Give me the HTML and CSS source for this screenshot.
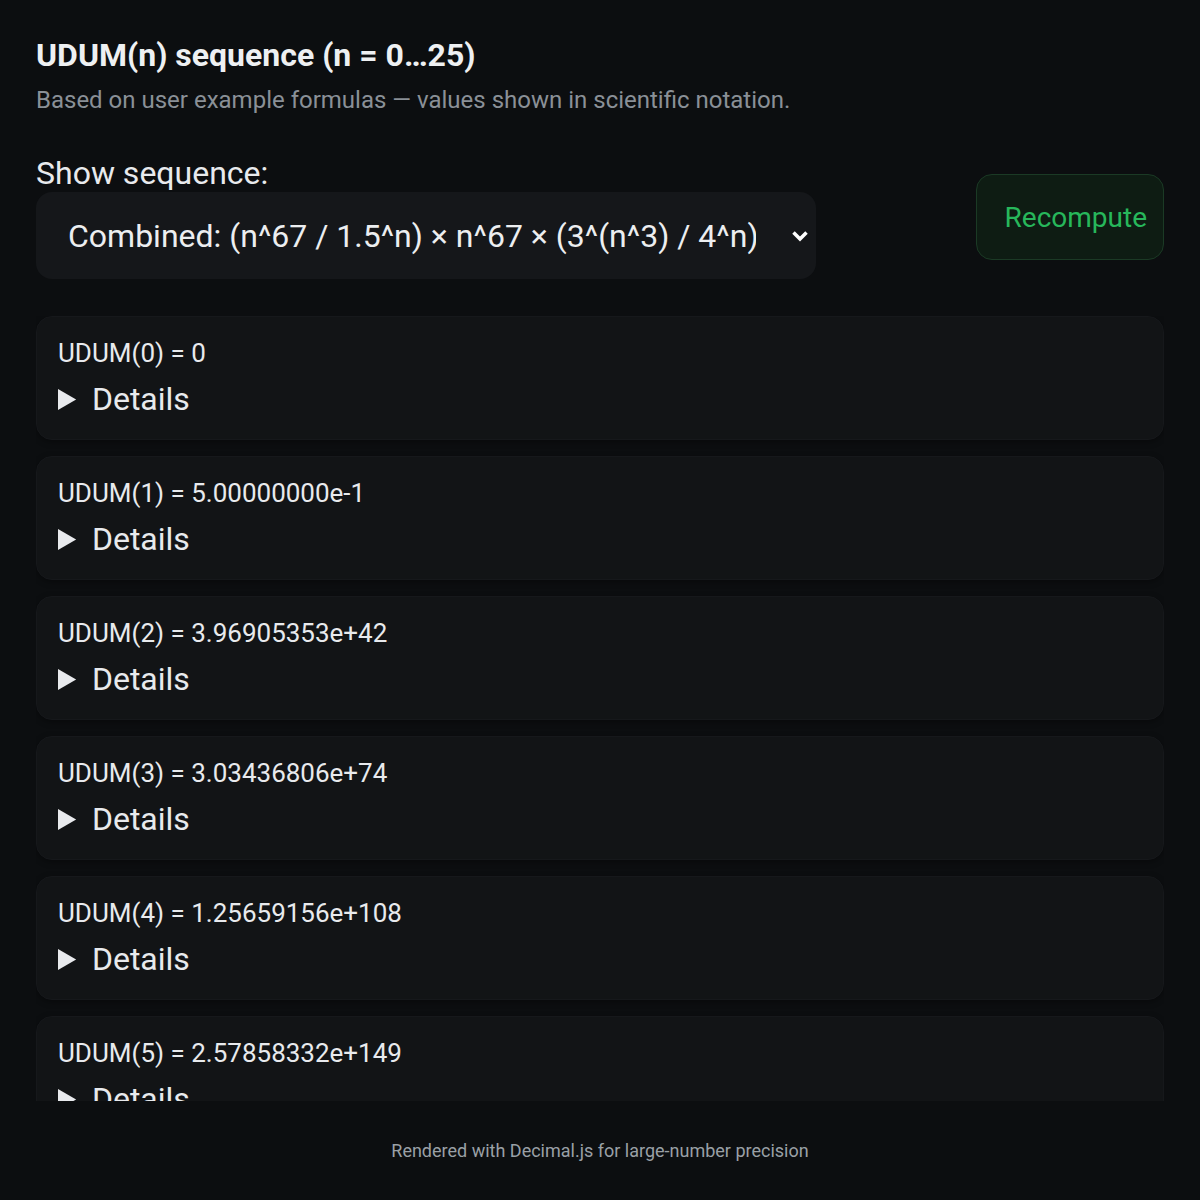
FILE: index.html
```html
<!DOCTYPE html>
<html lang="en">
<head>
  <meta charset="UTF-8">
  <meta name="viewport" content="width=device-width, initial-scale=1.0">
  <title>UDUM(n) sequence</title>
  <link rel="stylesheet" href="styles.css">
</head>
<body>
  <div class="app">
    <header class="head">
      <h1>UDUM(n) sequence (n = 0…25)</h1>
      <p class="sub">Based on user example formulas — values shown in scientific notation.</p>
    </header>

    <div class="controls">
      <div class="pick">
        <label for="seq">Show sequence:</label>
        <div class="select-wrap">
          <select id="seq">
            <option>Combined: (n^67 / 1.5^n) × n^67 × (3^(n^3) / 4^n)</option>
            <option>A: n^67 / 1.5^n</option>
            <option>B: n^67</option>
            <option>C: 3^(n^3) / 4^n</option>
          </select>
          <svg class="chev" width="18" height="12" viewBox="0 0 18 12"><path d="M2.5 2.5 L9 9 L15.5 2.5" fill="none" stroke="#fff" stroke-width="3.5"/></svg>
        </div>
      </div>
      <button class="recompute">Recompute</button>
    </div>

    <div class="list">
      <div class="item">
        <div class="val">UDUM(0) = 0</div>
        <details><summary>Details</summary><div class="terms">A = 0, B = 0, C = 0.25</div></details>
      </div>
      <div class="item">
        <div class="val">UDUM(1) = 5.00000000e-1</div>
        <details><summary>Details</summary><div class="terms">A = 6.66666667e-1, B = 1, C = 7.5e-1</div></details>
      </div>
      <div class="item">
        <div class="val">UDUM(2) = 3.96905353e+42</div>
        <details><summary>Details</summary><div class="terms">n = 2</div></details>
      </div>
      <div class="item">
        <div class="val">UDUM(3) = 3.03436806e+74</div>
        <details><summary>Details</summary><div class="terms">n = 3</div></details>
      </div>
      <div class="item">
        <div class="val">UDUM(4) = 1.25659156e+108</div>
        <details><summary>Details</summary><div class="terms">n = 4</div></details>
      </div>
      <div class="item">
        <div class="val">UDUM(5) = 2.57858332e+149</div>
        <details><summary>Details</summary><div class="terms">n = 5</div></details>
      </div>
    </div>

    <footer class="foot">Rendered with Decimal.js for large-number precision</footer>
  </div>
</body>
</html>
```

FILE: styles.css
```css
* { box-sizing: border-box; }
html, body { margin: 0; height: 100%; }
body { background: #0c0e10; color: #e8eaed; font-family: Roboto, "Noto Sans", Arial, sans-serif; }

.app { height: 100vh; display: flex; flex-direction: column; padding: 36px 36px 0; }

.head h1 { margin: 0; font-size: 32px; font-weight: 700; line-height: 38px; color: #eef0f2; }
.sub { margin: 12px 0 0; font-size: 24px; line-height: 28px; color: #8a9097; }

.controls { display: flex; justify-content: space-between; align-items: center; margin-top: 41px; }
.pick { display: flex; flex-direction: column; gap: 1px; }
.pick label { font-size: 32px; line-height: 36px; }
.select-wrap { position: relative; width: 780px; }
.select-wrap select {
  appearance: none; width: 100%; height: 87px; padding: 0 60px 0 32px;
  background: #15171a; color: #eceef0; border: none; border-radius: 16px;
  font-family: inherit; font-size: 32px; outline: none;
}
.chev { position: absolute; right: 7px; top: 38px; pointer-events: none; }

.recompute {
  height: 86px; padding: 0 16px 0 28px; border-radius: 16px;
  background: #0e1c13; border: 1.5px solid #1b3a25; color: #27b75b;
  font-family: inherit; font-size: 28px; cursor: pointer;
}

.list { flex: 1; overflow-y: auto; scrollbar-width: none; margin-top: 37px; display: flex; flex-direction: column; gap: 16px; }
.item {
  flex: none; height: 124px; padding: 21px 21px 0;
  background: #121416; border: 1px solid #16181b; border-radius: 16px;
  box-shadow: 0 2px 6px rgba(0, 0, 0, 0.35);
}
.val { font-size: 26px; line-height: 30px; }
details { margin-top: 12px; }
summary { font-size: 32px; line-height: 38px; cursor: pointer; }
.terms { font-size: 20px; color: #9aa0a6; padding: 8px 0; }

.foot { flex: none; height: 99px; display: flex; align-items: center; justify-content: center; font-size: 18px; color: #9aa0a6; }
```
